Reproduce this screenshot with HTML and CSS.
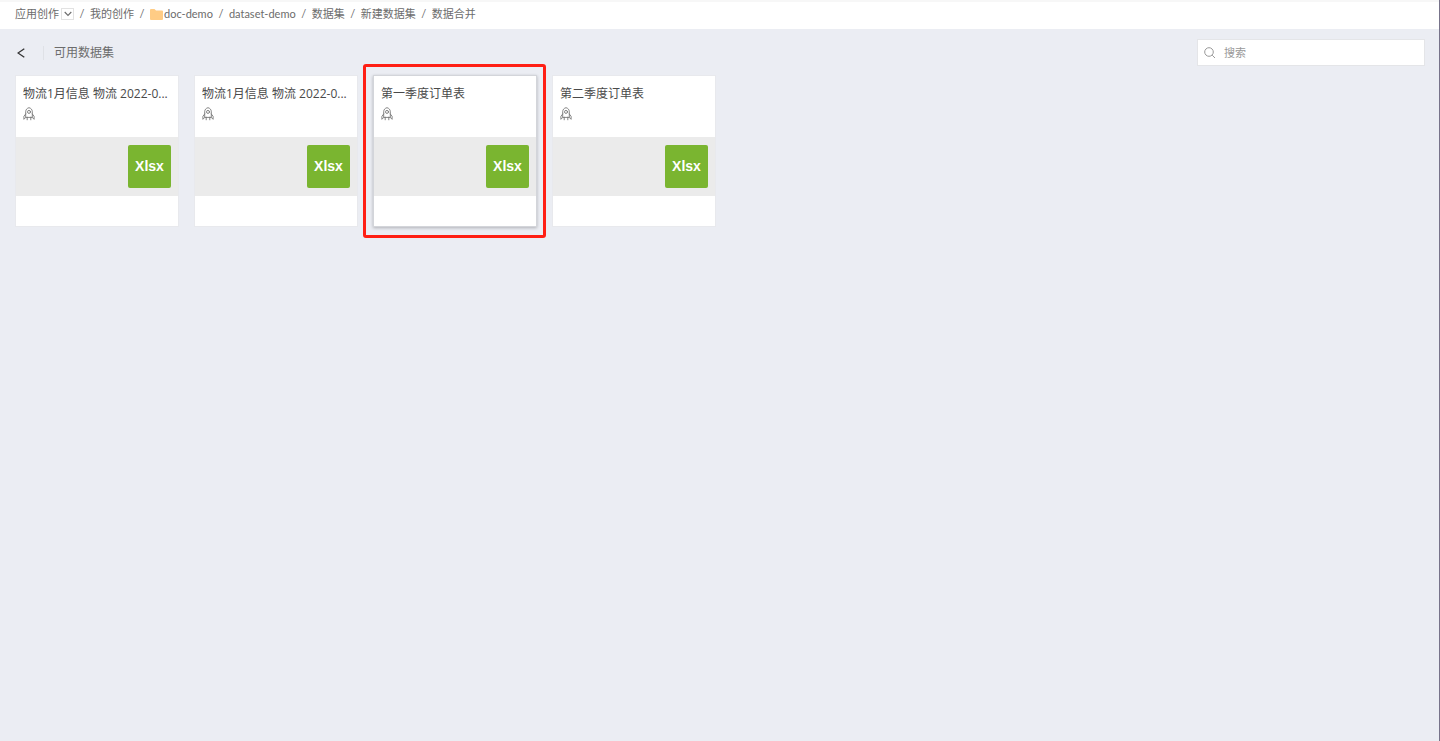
FILE: index.html
```html
<!DOCTYPE html>
<html lang="zh-CN">
<head>
    <meta charset="UTF-8">
    <meta name="viewport" content="width=device-width, initial-scale=1.0">
    <title>数据合并</title>
    <link rel="stylesheet" href="styles.css">
</head>
<body>
    <svg class="sprite" width="0" height="0" aria-hidden="true">
        <symbol id="rocket" viewBox="0 0 12 14">
            <g fill="none" stroke="currentColor" stroke-width="0.9" stroke-linecap="round" stroke-linejoin="round">
                <path d="M2.700 10V4.800C2.700 2.600 4 1.200 6 0.700C8 1.200 9.300 2.600 9.300 4.800V10Z"></path>
                <circle cx="6" cy="4.900" r="1.500"></circle>
                <path d="M2.700 7L0.900 9.300V12.300L2.700 10.500M9.300 7L11.100 9.300V12.300L9.300 10.500"></path>
                <path d="M4.200 10.200V12.800M7.800 10.200V12.800"></path>
            </g>
        </symbol>
    </svg>

    <nav class="breadcrumb">
        <a href="#">应用创作</a>
        <button class="app-toggle" type="button" aria-label="切换应用">
            <svg width="8" height="6" viewBox="0 0 8 6" fill="none" stroke="currentColor" stroke-width="1.100">
                <path d="M0.700 1L4 4.500L7.300 1"></path>
            </svg>
        </button>
        <span class="separator">/</span>
        <a href="#">我的创作</a>
        <span class="separator">/</span>
        <a href="#" class="folder">
            <svg width="13" height="11" viewBox="0 0 13 11" fill="#ffcc85">
                <path d="M0 1Q0 0 1 0H4.500L6 1.500H12Q13 1.500 13 2.500V10Q13 11 12 11H1Q0 11 0 10Z"></path>
            </svg>
            doc-demo
        </a>
        <span class="separator">/</span>
        <a href="#">dataset-demo</a>
        <span class="separator">/</span>
        <a href="#">数据集</a>
        <span class="separator">/</span>
        <a href="#">新建数据集</a>
        <span class="separator">/</span>
        <span>数据合并</span>
    </nav>

    <main class="content">
        <div class="toolbar">
            <button class="back-button" type="button" aria-label="返回">
                <svg width="8" height="10" viewBox="0 0 8 10" fill="none" stroke="currentColor" stroke-width="1.300">
                    <path d="M7.300 0.700L1 5L7.300 9.300"></path>
                </svg>
            </button>
            <h1 class="title">可用数据集</h1>
            <label class="search">
                <svg width="12" height="12" viewBox="0 0 12 12" fill="none" stroke="currentColor" stroke-width="1">
                    <circle cx="5" cy="5" r="4.300"></circle>
                    <path d="M8.200 8.200L11 11"></path>
                </svg>
                <input type="text" placeholder="搜索" aria-label="搜索">
            </label>
        </div>

        <div class="card-list">
            <article class="card">
                <div class="card-header">
                    <h2 class="card-title">物流1月信息 物流 2022-0...</h2>
                    <svg class="rocket" width="12" height="14"><use href="#rocket"></use></svg>
                </div>
                <div class="card-body"><span class="file-type">Xlsx</span></div>
                <div class="card-footer"></div>
            </article>
            <article class="card">
                <div class="card-header">
                    <h2 class="card-title">物流1月信息 物流 2022-0...</h2>
                    <svg class="rocket" width="12" height="14"><use href="#rocket"></use></svg>
                </div>
                <div class="card-body"><span class="file-type">Xlsx</span></div>
                <div class="card-footer"></div>
            </article>
            <article class="card selected">
                <div class="card-header">
                    <h2 class="card-title">第一季度订单表</h2>
                    <svg class="rocket" width="12" height="14"><use href="#rocket"></use></svg>
                </div>
                <div class="card-body"><span class="file-type">Xlsx</span></div>
                <div class="card-footer"></div>
            </article>
            <article class="card">
                <div class="card-header">
                    <h2 class="card-title">第二季度订单表</h2>
                    <svg class="rocket" width="12" height="14"><use href="#rocket"></use></svg>
                </div>
                <div class="card-body"><span class="file-type">Xlsx</span></div>
                <div class="card-footer"></div>
            </article>
        </div>
    </main>
</body>
</html>
```

FILE: styles.css
```css
:root {
    --bg-page: #ebedf3;
    --bg-card: #ffffff;
    --bg-band: #ebebeb;
    --border-color: #e4e5e8;
    --text-primary: #4a4a4a;
    --text-secondary: #6c6c6c;
    --text-muted: #999999;
    --green: #7ab530;
    --highlight: #ff1f14;
}

* {
    margin: 0;
    padding: 0;
    box-sizing: border-box;
}

body {
    min-height: 100vh;
    display: flex;
    flex-direction: column;
    background: var(--bg-page);
    border-right: 1px solid #77738a;
    color: var(--text-secondary);
    font-family: "Open Sans", "Noto Sans CJK SC", sans-serif;
    font-size: 11px;
    line-height: 16px;
}

button {
    border: none;
    background: none;
    color: inherit;
    cursor: pointer;
}

.sprite {
    position: absolute;
}

.breadcrumb {
    display: flex;
    align-items: center;
    height: 29px;
    padding: 0 15px 1px;
    background: var(--bg-card);
    box-shadow: inset 0 2px #f7f7f7;
    font-family: Lato, "Noto Sans CJK SC", sans-serif;
}

.breadcrumb a {
    color: inherit;
    text-decoration: none;
}

.separator {
    width: 16px;
    text-align: center;
}

.app-toggle {
    display: flex;
    align-items: center;
    justify-content: center;
    width: 13px;
    height: 12px;
    margin-left: 2px;
    border: 1px solid #e2e2e2;
}

.folder {
    display: flex;
    align-items: center;
    gap: 1px;
}

.content {
    flex: 1;
    padding: 10px 14px 10px 15px;
}

.toolbar {
    display: flex;
    align-items: center;
    margin-bottom: 9px;
}

.back-button {
    display: flex;
    align-items: center;
    width: 29px;
    height: 14px;
    padding-left: 2px;
    border-right: 1px solid #dfe1e6;
    color: #333333;
}

.title {
    margin-left: 10px;
    font-size: 12px;
    font-weight: 400;
}

.search {
    display: flex;
    align-items: center;
    gap: 8px;
    width: 228px;
    height: 27px;
    margin-left: auto;
    padding: 0 6px;
    background: var(--bg-card);
    border: 1px solid var(--border-color);
    color: var(--text-muted);
}

.search input {
    flex: 1;
    min-width: 0;
    border: none;
    outline: none;
    background: none;
    font: inherit;
}

.search input::placeholder {
    color: var(--text-muted);
}

.card-list {
    display: flex;
    flex-wrap: wrap;
    gap: 15px;
}

.card {
    position: relative;
    width: 164px;
    background: var(--bg-card);
    border: 1px solid #e8e9ed;
}

.card-header {
    height: 61px;
    padding: 10px 7px;
}

.card-title {
    overflow: hidden;
    color: var(--text-primary);
    font-size: 12px;
    font-weight: 400;
    white-space: nowrap;
}

.rocket {
    display: block;
    margin-top: 5px;
    color: #777777;
}

.card-body {
    display: flex;
    align-items: center;
    justify-content: flex-end;
    height: 59px;
    padding: 0 7px;
    background: var(--bg-band);
}

.file-type {
    width: 43px;
    border-radius: 2px;
    background: var(--green);
    color: #ffffff;
    font-family: "Liberation Sans", Arial, sans-serif;
    font-size: 14px;
    font-weight: 700;
    line-height: 43px;
    text-align: center;
}

.card-footer {
    height: 30px;
}

.card.selected {
    border-color: #d3d5da;
    box-shadow: 0 1px 3px rgba(0, 0, 0, 0.25);
}

/* red frame around the selected card */
.card.selected::after {
    content: "";
    position: absolute;
    inset: -12px -10px -12px -11px;
    border: 3px solid var(--highlight);
    border-radius: 3px;
}
```
